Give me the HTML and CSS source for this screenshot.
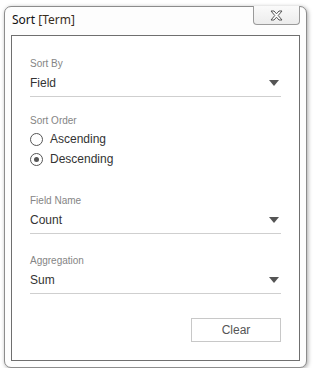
FILE: index.html
```html
<!DOCTYPE html>
<html lang="en">
<head>
    <meta charset="UTF-8">
    <meta name="viewport" content="width=device-width, initial-scale=1.0">
    <title>Sort [Term]</title>
    <link rel="stylesheet" href="styles.css">
</head>
<body>

    <div class="window">
        <div class="titlebar">
            <span class="title">Sort <span class="term">[Term]</span></span>
            <button class="close-btn" aria-label="Close">
                <svg width="13" height="11" viewBox="0 0 13 11">
                    <polygon points="1,1 4,1 6.5,3.8 9,1 12,1 8.2,5.5 12,10 9,10 6.5,7.2 4,10 1,10 4.8,5.5"
                             fill="#fff" stroke="#555" stroke-width="1" stroke-linejoin="round"/>
                </svg>
            </button>
        </div>

        <div class="panel">
            <div class="field">
                <div class="label">Sort By</div>
                <div class="select">
                    <span>Field</span>
                    <span class="arrow"></span>
                </div>
            </div>

            <div class="group sort-order">
                <div class="label">Sort Order</div>
                <div class="radio"><span class="circle"></span>Ascending</div>
                <div class="radio checked"><span class="circle"></span>Descending</div>
            </div>

            <div class="field field-name">
                <div class="label">Field Name</div>
                <div class="select">
                    <span>Count</span>
                    <span class="arrow"></span>
                </div>
            </div>

            <div class="field aggregation">
                <div class="label">Aggregation</div>
                <div class="select">
                    <span>Sum</span>
                    <span class="arrow"></span>
                </div>
            </div>

            <div class="actions">
                <button class="clear-btn">Clear</button>
            </div>
        </div>
    </div>

</body>
</html>
```

FILE: styles.css
```css
* {
    margin: 0;
    padding: 0;
    box-sizing: border-box;
}

body {
    background: #fff;
    font-family: "Liberation Sans", Arial, sans-serif;
}

.window {
    margin: 6px 0 0 4px;
    width: 303px;
    height: 362px;
    border: 1px solid #8c8c8c;
    border-radius: 7px;
    background: #fdfdfd;
    box-shadow: 1px 1px 4px rgba(0,0,0,0.35);
    display: flex;
    flex-direction: column;
}

.titlebar {
    height: 28px;
    display: flex;
    justify-content: space-between;
    align-items: flex-start;
    padding-left: 7px;
}

.title {
    font-family: "Noto Sans", "Open Sans", sans-serif;
    font-size: 12px;
    color: #111;
    line-height: 16px;
    margin-top: 5px;
}

.term {
    color: #3a2e1c;
}

.close-btn {
    margin-top: -1px;
    margin-right: 6px;
    width: 47px;
    height: 19px;
    border: 1px solid #9a9a9a;
    border-top: none;
    border-radius: 0 0 4px 4px;
    background: linear-gradient(#fafafa, #ececec);
    display: flex;
    align-items: center;
    justify-content: center;
}

.panel {
    flex: 1;
    margin: 0 6px 6px 6px;
    border: 1px solid #6f6f6f;
    background: #fff;
    padding: 22px 18px 0 18px;
}

.label {
    font-size: 10px;
    line-height: 12px;
    color: #858585;
}

.select {
    margin-top: 5px;
    display: flex;
    justify-content: space-between;
    align-items: center;
    font-size: 12px;
    line-height: 16px;
    color: #333;
    padding-bottom: 5px;
    border-bottom: 1px solid #cfcfcf;
}

.arrow {
    width: 0;
    height: 0;
    margin-right: 2px;
    border-left: 5px solid transparent;
    border-right: 5px solid transparent;
    border-top: 6px solid #555;
}

.sort-order {
    margin-top: 18px;
}

.sort-order .label {
    margin-bottom: 2px;
}

.radio {
    display: flex;
    align-items: center;
    gap: 7px;
    height: 20px;
    font-size: 12px;
    color: #333;
}

.circle {
    width: 13px;
    height: 13px;
    border: 1px solid #555;
    border-radius: 50%;
    display: flex;
    align-items: center;
    justify-content: center;
    background: #fff;
}

.radio.checked .circle::after {
    content: "";
    width: 5px;
    height: 5px;
    border-radius: 50%;
    background: #555;
}

.field-name {
    margin-top: 26px;
}

.aggregation {
    margin-top: 21px;
}

.actions {
    margin-top: 24px;
    display: flex;
    justify-content: flex-end;
}

.clear-btn {
    width: 90px;
    height: 24px;
    border: 1px solid #c8c8c8;
    background: #fff;
    font-family: "Liberation Sans", Arial, sans-serif;
    font-size: 12px;
    color: #555;
}
```
